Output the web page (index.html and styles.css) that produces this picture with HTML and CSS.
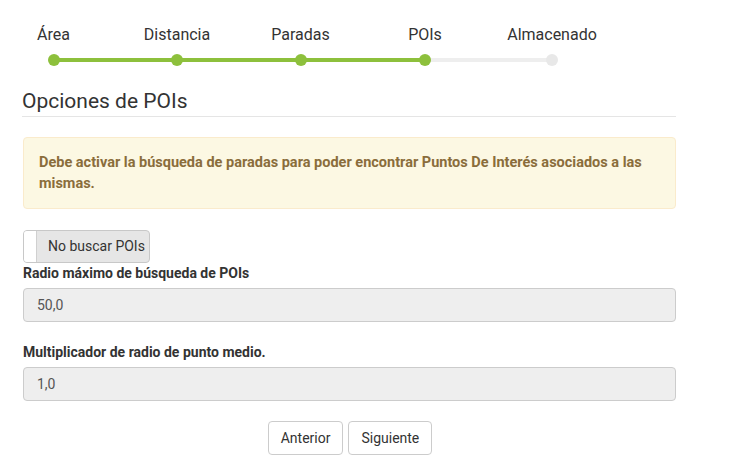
FILE: index.html
```html
<!DOCTYPE html>
<html lang="es">
<head>
<meta charset="utf-8">
<link rel="stylesheet" href="styles.css">
</head>
<body>
<div class="page">
  <ol class="stepper">
    <li class="step done"><span class="label">Área</span><span class="dot"></span></li>
    <li class="step done"><span class="label">Distancia</span><span class="dot"></span></li>
    <li class="step done"><span class="label">Paradas</span><span class="dot"></span></li>
    <li class="step current"><span class="label">POIs</span><span class="dot"></span></li>
    <li class="step todo"><span class="label">Almacenado</span><span class="dot"></span></li>
  </ol>

  <div class="content">
    <h4 class="title">Opciones de POIs</h4>
    <div class="alert">Debe activar la búsqueda de paradas para poder encontrar Puntos De Interés asociados a las mismas.</div>

    <div class="toggle"><span class="knob"></span><span class="toggle-text">No buscar POIs</span></div>

    <label class="field-label">Radio máximo de búsqueda de POIs</label>
    <div class="input">50,0</div>

    <label class="field-label second">Multiplicador de radio de punto medio.</label>
    <div class="input">1,0</div>

    <div class="buttons">
      <button class="btn">Anterior</button>
      <button class="btn">Siguiente</button>
    </div>
  </div>
</div>
</body>
</html>
```
FILE: styles.css
```css
* { box-sizing: border-box; }
html, body { margin: 0; padding: 0; background: #fff; }
body {
  font-family: Roboto, "Liberation Sans", Arial, sans-serif;
  font-size: 14px;
  color: #333;
  line-height: 20px;
}
.page { width: 730px; }

.stepper {
  list-style: none;
  margin: 0 0 0 -8px;
  padding: 25px 0 0 0;
  display: grid;
  grid-template-columns: 123px 124px 123px 126px 128px;
}
.step {
  position: relative;
  display: flex;
  flex-direction: column;
  align-items: center;
  font-size: 16px;
  color: #333;
  height: 43px;
}
.step .label { line-height: 20px; height: 20px; }
.step .dot {
  position: relative;
  z-index: 2;
  margin-top: 9px;
  width: 12px;
  height: 12px;
  border-radius: 50%;
  background: #8dc03c;
}
.step.todo .dot { background: #e8e8e8; }
.step::before {
  content: "";
  position: absolute;
  top: 33px;
  left: 50%;
  width: 100%;
  height: 4px;
  background: #8dc03c;
  z-index: 1;
}
.step.current::before { background: #eeeeee; }
.step.todo::before { display: none; }

.content { padding: 0 54px 0 23px; }
.title {
  margin: 20px 0 0 -1px;
  font-size: 21px;
  font-weight: 400;
  line-height: 26px;
  color: #333;
  padding-bottom: 2px;
  border-bottom: 1px solid #e5e5e5;
}
.alert {
  margin-top: 20px;
  padding: 14px 15px 14px 15px;
  background: #fcf8e3;
  border: 1px solid #faebcc;
  border-radius: 4px;
  color: #8a6d3b;
  font-weight: 700;
  font-size: 14.5px;
  line-height: 21px;
}
.toggle {
  margin-top: 21px;
  width: 127px;
  height: 33px;
  display: flex;
  border: 1px solid #c8c8c8;
  border-radius: 4px;
  background: #e6e6e6;
  overflow: hidden;
}
.knob {
  width: 13px;
  background: #fff;
  border-right: 1px solid #d0d0d0;
}
.toggle-text {
  padding-left: 11px;
  line-height: 31px;
  font-size: 14px;
  color: #333;
}
.field-label {
  display: block;
  font-weight: 700;
  font-size: 14px;
  line-height: 20px;
  margin-top: 0;
  margin-bottom: 5px;
}
.field-label.second { margin-top: 20px; }
.input {
  height: 34px;
  padding: 6px 13px;
  background: #eeeeee;
  border: 1px solid #cccccc;
  border-radius: 4px;
  color: #555;
  font-size: 14px;
  line-height: 20px;
}
.buttons {
  display: flex;
  justify-content: center;
  gap: 5px;
  margin-top: 20px;
  padding-left: 1px;
}
.btn {
  font-family: Roboto, "Liberation Sans", Arial, sans-serif;
  font-size: 14px;
  color: #333;
  background: #fff;
  border: 1px solid #ccc;
  border-radius: 4px;
  height: 34px;
  padding: 6px 12px;
  line-height: 20px;
}
```
